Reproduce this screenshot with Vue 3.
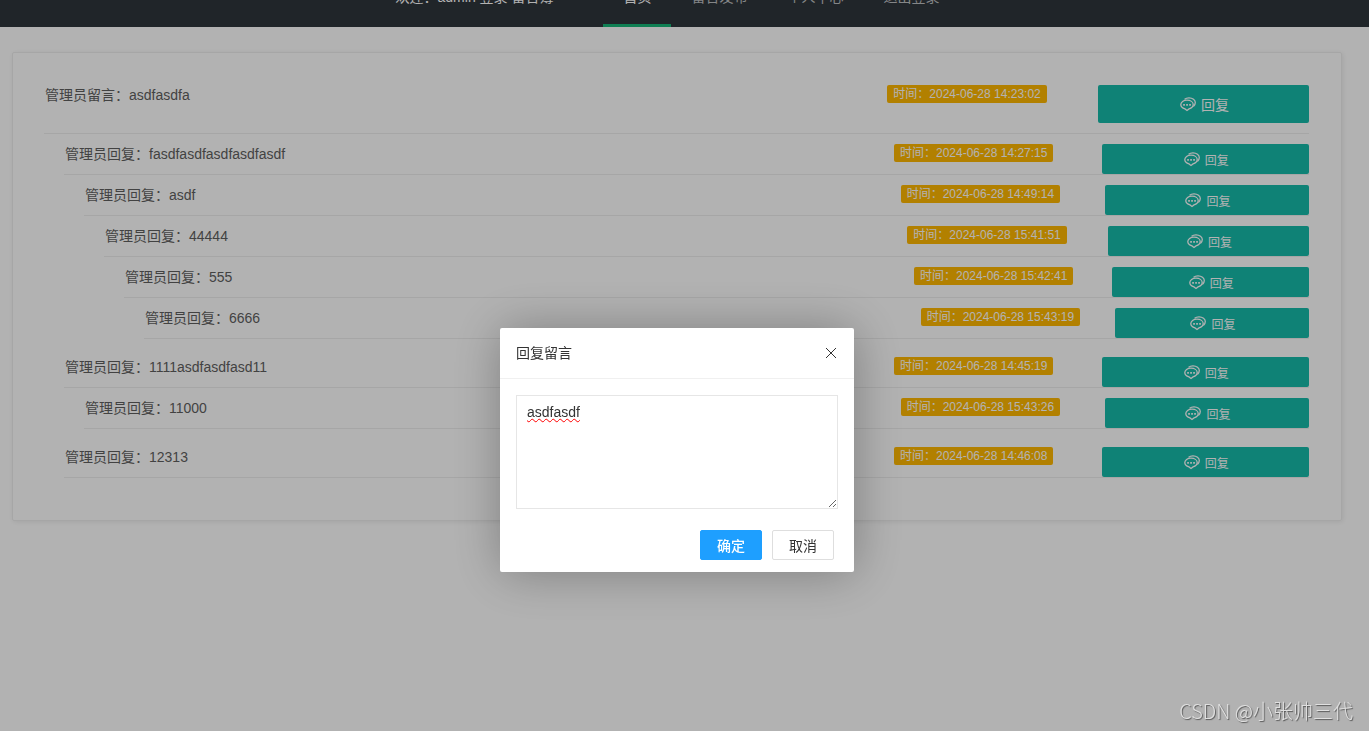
<script setup>
import { computed, ref } from 'vue'

const navItems = ['首页', '留言发布', '个人中心', '退出登录']
const replyText = ref('asdfasdf')
const open = ref(true)

const message = { text: 'asdfasdfa', time: '2024-06-28 14:23:02' }

const replies = [
  {
    text: 'fasdfasdfasdfasdfasdf', time: '2024-06-28 14:27:15', children: [
      {
        text: 'asdf', time: '2024-06-28 14:49:14', children: [
          {
            text: '44444', time: '2024-06-28 15:41:51', children: [
              {
                text: '555', time: '2024-06-28 15:42:41', children: [
                  { text: '6666', time: '2024-06-28 15:43:19' },
                ],
              },
            ],
          },
        ],
      },
    ],
  },
  {
    text: '1111asdfasdfasd11', time: '2024-06-28 14:45:19', children: [
      { text: '11000', time: '2024-06-28 15:43:26' },
    ],
  },
  { text: '12313', time: '2024-06-28 14:46:08' },
]

function flatten(list, depth) {
  return list.flatMap((item, i) => [
    { text: item.text, time: item.time, depth, newThread: i > 0 },
    ...flatten(item.children || [], depth + 1),
  ])
}

const rows = computed(() => [
  { ...message, label: '管理员留言：', depth: 0, main: true },
  ...flatten(replies, 1).map((r) => ({ ...r, label: '管理员回复：' })),
])
</script>

<template>
  <div class="page">
    <header class="topbar">
      <nav class="nav">
        <span class="welcome">欢迎：admin 登录 留言簿</span>
        <a v-for="(item, i) in navItems" :key="item" href="#" class="nav-item" :class="{ active: i === 0 }">{{ item }}</a>
      </nav>
    </header>

    <main class="card">
      <div
        v-for="(row, i) in rows"
        :key="i"
        class="row"
        :class="{ main: row.main, thread: row.newThread }"
        :style="{ marginLeft: row.depth * 20 + 'px' }"
      >
        <p class="text">{{ row.label }}{{ row.text }}</p>
        <div><span class="badge">时间：{{ row.time }}</span></div>
        <button type="button" class="reply">
          <svg class="icon" viewBox="0 0 16 16" aria-hidden="true">
            <path d="M7 4.200C3.500 4.200.800 6.100.800 8.600c0 2 1.800 3.700 4.200 4.300L7 14.400l2-1.500c2.400-.6 4.200-2.300 4.200-4.300 0-2.500-2.700-4.400-6.200-4.400z" />
            <path d="M4.600 3.200C5.700 2.300 7.300 1.800 9 1.800c3.600 0 6.300 2.100 6.300 4.800 0 1.600-.7 2.900-1.900 3.800" />
            <path class="dots" d="M3.200 8h1.700v1.700H3.200zM6.200 8h1.700v1.700H6.200zM9.200 8h1.700v1.700H9.200z" />
          </svg>
          <span>回复</span>
        </button>
      </div>
    </main>

    <div v-if="open" class="shade">
      <section class="dialog" role="dialog" aria-labelledby="dialog-title">
        <div class="dialog-head">
          <label id="dialog-title" for="reply-text">回复留言</label>
          <button type="button" class="close" aria-label="关闭" @click="open = false">
            <svg viewBox="0 0 12 12" aria-hidden="true"><path d="M1 1l10 10M11 1L1 11" /></svg>
          </button>
        </div>
        <div class="dialog-body">
          <textarea id="reply-text" v-model="replyText" class="input"></textarea>
        </div>
        <div class="dialog-foot">
          <button type="button" class="btn primary">确定</button>
          <button type="button" class="btn" @click="open = false">取消</button>
        </div>
      </section>
    </div>

    <div class="watermark">CSDN @小张帅三代</div>
  </div>
</template>

<style>
html,
body {
  background: #fff;
}
</style>

<style scoped>
.page,
.page * {
  box-sizing: border-box;
}

.page {
  min-height: 100vh;
  font: 14px/20px "Liberation Sans", "Noto Sans CJK SC", sans-serif;
  color: #5f5f5f;
}

button,
textarea {
  font-family: inherit;
}

.topbar {
  display: flex;
  align-items: flex-end;
  justify-content: center;
  height: 27px;
  overflow: hidden;
  background: #2f363c;
}

.nav {
  display: flex;
  flex: none;
  height: 60px;
  line-height: 60px;
  margin-right: 14px;
}

.welcome {
  margin-right: 50px;
  color: #fff;
  white-space: nowrap;
}

.nav-item {
  padding: 0 20px;
  color: rgba(255, 255, 255, 0.7);
  text-decoration: none;
}

.nav-item.active {
  color: #fff;
  border-bottom: 3px solid #16b777;
}

.card {
  margin: 25px 27px 0 12px;
  padding: 32px 32px 42px 31px;
  border: 1px solid #eee;
  border-radius: 2px;
  box-shadow: 1px 1px 4px rgba(0, 0, 0, 0.08);
}

.row {
  display: grid;
  grid-template-columns: 8fr 2fr 2fr;
  align-items: start;
  margin-top: 10px;
  border-bottom: 1px solid #eee;
}

.row.main {
  margin-top: 0;
  padding-bottom: 10px;
}

.row.thread {
  margin-top: 18px;
}

.text {
  margin: 0;
  padding-left: 1px;
}

.badge {
  display: block;
  width: max-content;
  height: 18px;
  padding: 0 6px;
  border-radius: 2px;
  background: #ffb800;
  color: #fff;
  font-size: 12px;
  line-height: 18px;
}

.reply {
  display: flex;
  align-items: center;
  justify-content: center;
  gap: 5px;
  height: 30px;
  padding: 0 0 0 2px;
  border: 0;
  border-radius: 2px;
  background: #16baaa;
  color: #fff;
  font-size: 12px;
}

.main .reply {
  height: 38px;
  font-size: 14px;
}

.icon {
  width: 16px;
  height: 16px;
  fill: none;
  stroke: #fff;
  stroke-width: 1.3;
}

.icon .dots {
  fill: #fff;
  stroke: none;
}

.shade {
  position: fixed;
  inset: 0;
  display: flex;
  align-items: center;
  justify-content: center;
  padding: 169px 15px 0 0;
  background: rgba(0, 0, 0, 0.3);
}

.dialog {
  width: 354px;
  border-radius: 2px;
  background: #fff;
  box-shadow: 1px 1px 50px rgba(0, 0, 0, 0.3);
  color: #333;
}

.dialog-head {
  display: flex;
  align-items: center;
  justify-content: space-between;
  height: 51px;
  padding: 0 16px;
  border-bottom: 1px solid #f0f0f0;
}

.close {
  display: flex;
  padding: 1px;
  border: 0;
  background: none;
}

.close svg {
  width: 12px;
  height: 12px;
  fill: none;
  stroke: #333;
  stroke-width: 1;
}

.dialog-body {
  padding: 16px 16px 0;
}

.input {
  display: block;
  width: 100%;
  height: 114px;
  padding: 6px 10px;
  border: 1px solid #e6e6e6;
  border-radius: 0;
  outline: 0;
  background: #fff;
  color: #333;
  font-size: 14px;
  line-height: 20px;
  text-decoration: spelling-error underline;
  text-decoration: underline wavy #f00 1px;
  text-decoration-skip-ink: none;
}

.dialog-foot {
  display: flex;
  justify-content: flex-end;
  gap: 10px;
  padding: 21px 20px 12px;
}

.btn {
  width: 62px;
  height: 30px;
  padding: 0;
  border: 1px solid #dedede;
  border-radius: 2px;
  background: #fff;
  color: #333;
  font-size: 14px;
}

.btn.primary {
  border-color: #1e9fff;
  background: #1e9fff;
  color: #fff;
  font-weight: 500;
}

.watermark {
  position: fixed;
  right: 16px;
  bottom: 6px;
  color: #e0e0e0;
  font: 20px/28px "Noto Sans CJK SC", sans-serif;
  font-weight: 300;
  text-shadow: 1px 1px 1px #555;
}
</style>
